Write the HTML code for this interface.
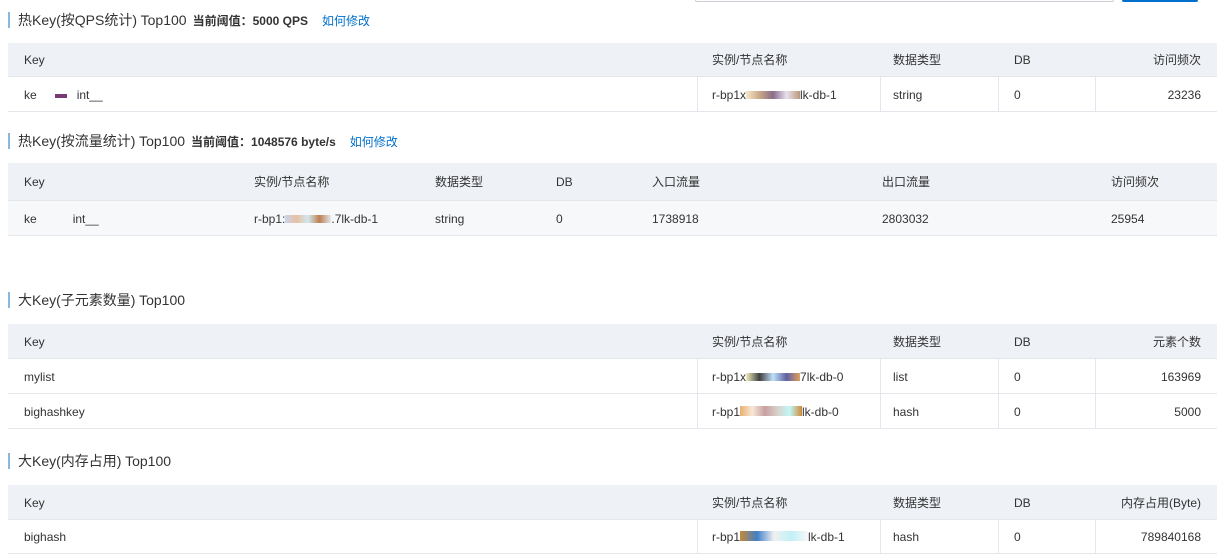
<!DOCTYPE html>
<html><head><meta charset="utf-8"><style>
*{margin:0;padding:0;box-sizing:border-box}
body{width:1229px;height:559px;background:#fff;position:relative;overflow:hidden;font-family:"Liberation Sans","Noto Sans CJK SC",sans-serif;font-size:12px;color:#333}
.a{position:absolute;white-space:nowrap;line-height:16px;height:16px;top:0}
.bar{position:absolute;left:8px;width:2px;height:16px;background:#88b7e0}
.t{position:absolute;left:18px;font-size:14px;color:#333;white-space:nowrap;line-height:18px}
.t b{font-size:12px;margin-left:6px;font-weight:bold}
.t i{font-style:normal;font-size:12px;color:#0070cc;margin-left:14px}
.hd{position:absolute;left:8px;width:1209px;background:#eef1f6;border-bottom:1px solid #e3e6eb}
.rw{position:absolute;left:8px;width:1209px;border-bottom:1px solid #e3e6eb}
.v{position:absolute;width:1px;background:#e3e6eb}
.m{display:inline-block;width:6px;height:6px;vertical-align:middle}
</style></head><body>
<div class="a" style="left:695px;top:-10px;width:419px;height:12px;border:1px solid #c9cdd4;border-radius:2px"></div>
<div class="a" style="left:1122px;top:-10px;width:76px;height:12px;background:#0070cc;border-radius:2px"></div>

<div class="bar" style="top:12px"></div>
<div class="t" style="top:11px">热Key(按QPS统计) Top100<b>当前阈值：5000 QPS</b><i>如何修改</i></div>
<div class="hd" style="top:43px;height:34px"></div>
<div class="rw" style="top:77px;height:35px"></div>
<div class="v" style="left:697px;top:77px;height:34px"></div><div class="v" style="left:880px;top:77px;height:34px"></div><div class="v" style="left:998px;top:77px;height:34px"></div><div class="v" style="left:1095px;top:77px;height:34px"></div>
<div class="a" style="left:24px;top:52px">Key</div><div class="a" style="left:712px;top:52px">实例/节点名称</div><div class="a" style="left:893px;top:52px">数据类型</div><div class="a" style="left:1014px;top:52px">DB</div><div class="a" style="right:28px;top:52px">访问频次</div>
<div class="a" style="left:24px;top:87px">ke<span style="display:inline-block;width:18px"></span><span class="m" style="width:12px;background:#7a3a78;height:4px"></span><span style="display:inline-block;width:10px"></span>int__</div>
<div class="a" style="left:712px;top:87px">r-bp1x<span style="display:inline-block;width:54px;height:8px;background:linear-gradient(90deg,#f5e9c8,#c9a98a,#8a6d8a,#e8e0f0,#b89a7a)"></span>lk-db-1</div>
<div class="a" style="left:893px;top:87px">string</div><div class="a" style="left:1014px;top:87px">0</div><div class="a" style="right:28px;top:87px">23236</div>

<div class="bar" style="top:133px"></div>
<div class="t" style="top:132px">热Key(按流量统计) Top100<b>当前阈值：1048576 byte/s</b><i>如何修改</i></div>
<div class="hd" style="top:163px;height:38px"></div>
<div class="rw" style="top:201px;height:35px;background:#f7f8fa"></div>
<div class="a" style="left:24px;top:174px">Key</div><div class="a" style="left:254px;top:174px">实例/节点名称</div><div class="a" style="left:435px;top:174px">数据类型</div><div class="a" style="left:556px;top:174px">DB</div><div class="a" style="left:652px;top:174px">入口流量</div><div class="a" style="left:882px;top:174px">出口流量</div><div class="a" style="left:1111px;top:174px">访问频次</div>
<div class="a" style="left:24px;top:211px">ke<span style="display:inline-block;width:36px"></span>int__</div>
<div class="a" style="left:254px;top:211px">r-bp1:<span style="display:inline-block;width:46px;height:8px;background:linear-gradient(90deg,#c8d4f0,#e8c0a0,#d0e8f0,#c08050,#e0e8f0)"></span>.7lk-db-1</div>
<div class="a" style="left:435px;top:211px">string</div><div class="a" style="left:556px;top:211px">0</div><div class="a" style="left:652px;top:211px">1738918</div><div class="a" style="left:882px;top:211px">2803032</div><div class="a" style="left:1111px;top:211px">25954</div>

<div class="bar" style="top:292px"></div>
<div class="t" style="top:291px">大Key(子元素数量) Top100</div>
<div class="hd" style="top:324px;height:35px"></div>
<div class="rw" style="top:359px;height:35px"></div>
<div class="rw" style="top:394px;height:35px"></div>
<div class="v" style="left:697px;top:359px;height:69px"></div><div class="v" style="left:880px;top:359px;height:69px"></div><div class="v" style="left:998px;top:359px;height:69px"></div><div class="v" style="left:1095px;top:359px;height:69px"></div>
<div class="a" style="left:24px;top:334px">Key</div><div class="a" style="left:712px;top:334px">实例/节点名称</div><div class="a" style="left:893px;top:334px">数据类型</div><div class="a" style="left:1014px;top:334px">DB</div><div class="a" style="right:28px;top:334px">元素个数</div>
<div class="a" style="left:24px;top:369px">mylist</div><div class="a" style="left:712px;top:369px">r-bp1x<span style="display:inline-block;width:54px;height:8px;background:linear-gradient(90deg,#f0f0c0,#404040,#c0e0f8,#6060a0,#e0a060)"></span>7lk-db-0</div><div class="a" style="left:893px;top:369px">list</div><div class="a" style="left:1014px;top:369px">0</div><div class="a" style="right:28px;top:369px">163969</div>
<div class="a" style="left:24px;top:404px">bighashkey</div><div class="a" style="left:712px;top:404px">r-bp1<span style="display:inline-block;width:62px;height:10px;background:linear-gradient(90deg,#e8b070,#f8e8d8,#c8a0a0,#d8d0c8,#c0f8f8,#d08838)"></span>lk-db-0</div><div class="a" style="left:893px;top:404px">hash</div><div class="a" style="left:1014px;top:404px">0</div><div class="a" style="right:28px;top:404px">5000</div>

<div class="bar" style="top:453px"></div>
<div class="t" style="top:452px">大Key(内存占用) Top100</div>
<div class="hd" style="top:485px;height:35px"></div>
<div class="rw" style="top:520px;height:34px"></div>
<div class="v" style="left:697px;top:520px;height:33px"></div><div class="v" style="left:880px;top:520px;height:33px"></div><div class="v" style="left:998px;top:520px;height:33px"></div><div class="v" style="left:1095px;top:520px;height:33px"></div>
<div class="a" style="left:24px;top:495px">Key</div><div class="a" style="left:712px;top:495px">实例/节点名称</div><div class="a" style="left:893px;top:495px">数据类型</div><div class="a" style="left:1014px;top:495px">DB</div><div class="a" style="right:28px;top:495px">内存占用(Byte)</div>
<div class="a" style="left:24px;top:529px">bighash</div><div class="a" style="left:712px;top:529px">r-bp1<span style="display:inline-block;width:68px;height:10px;background:linear-gradient(90deg,#c88838,#4080c8,#f0f0f0,#c0f0f8,#f8f8f8)"></span>lk-db-1</div><div class="a" style="left:893px;top:529px">hash</div><div class="a" style="left:1014px;top:529px">0</div><div class="a" style="right:28px;top:529px">789840168</div>
</body></html>
